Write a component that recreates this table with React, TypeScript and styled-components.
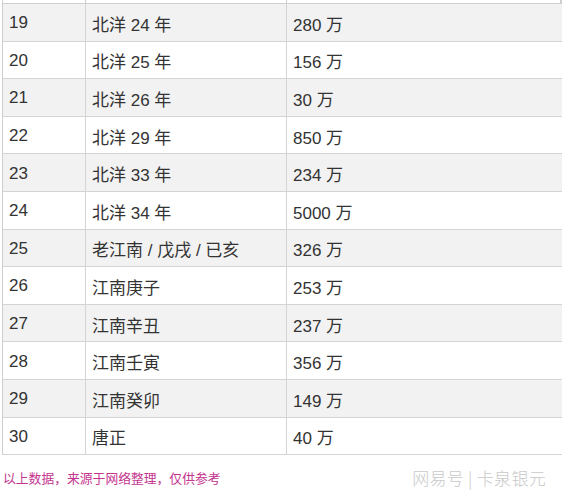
import { Fragment } from "react";
import styled, { createGlobalStyle } from "styled-components";

const GlobalStyle = createGlobalStyle`
    body {
        margin: 0;
        background: #ffffff;
        font-family: "Liberation Sans", "Noto Sans CJK SC", sans-serif;
    }
`;

const Page = styled.div`
    width: 563px;
    height: 501px;
    overflow: hidden;
    padding-left: 2px;
    box-sizing: border-box;
`;

const Table = styled.div`
    width: 559px;
    display: grid;
    grid-template-columns: 83px 201px 275px;
    border-left: 1px solid #cfcfcf;
    border-right: 1px solid #cfcfcf;
    box-sizing: border-box;
`;

const Cut = styled.div`
    height: 3px;
    border-bottom: 1px solid #cfcfcf;
    border-right: 1px solid #cfcfcf;

    &:last-child {
        border-right: none;
    }
`;

const Cell = styled.div<{ $shade: boolean; $last?: boolean }>`
    height: 37.6px;
    box-sizing: border-box;
    display: flex;
    align-items: center;
    padding: 2px 0 0 6px;
    font-size: 17px;
    color: #333333;
    background: ${(p) => (p.$shade ? "#f2f2f2" : "#ffffff")};
    border-bottom: 1px solid #d4d4d4;
    border-right: ${(p) => (p.$last ? "none" : "1px solid #d4d4d4")};
`;

const Footer = styled.div`
    height: 45px;
    display: flex;
    align-items: center;
    justify-content: space-between;
    padding-right: 17px;
`;

const Note = styled.span`
    font-family: "Noto Sans CJK SC", sans-serif;
    font-size: 12.8px;
    color: #c4358f;
    padding-left: 1px;
`;

const Mark = styled.span`
    font-family: "Noto Sans CJK SC", sans-serif;
    font-size: 17px;
    color: #c9c9c9;
    font-weight: 300;
    letter-spacing: 0.3px;
`;

const rows: [string, string, string][] = [
    ["19", "北洋 24 年", "280 万"],
    ["20", "北洋 25 年", "156 万"],
    ["21", "北洋 26 年", "30 万"],
    ["22", "北洋 29 年", "850 万"],
    ["23", "北洋 33 年", "234 万"],
    ["24", "北洋 34 年", "5000 万"],
    ["25", "老江南 / 戊戌 / 已亥", "326 万"],
    ["26", "江南庚子", "253 万"],
    ["27", "江南辛丑", "237 万"],
    ["28", "江南壬寅", "356 万"],
    ["29", "江南癸卯", "149 万"],
    ["30", "唐正", "40 万"],
];

export default function App() {
    return (
        <Page>
            <GlobalStyle />
            <Table>
                <Cut />
                <Cut />
                <Cut />
                {rows.map((r, i) => (
                    <Fragment key={r[0]}>
                        <Cell $shade={i % 2 === 0}>{r[0]}</Cell>
                        <Cell $shade={i % 2 === 0}>{r[1]}</Cell>
                        <Cell $shade={i % 2 === 0} $last>{r[2]}</Cell>
                    </Fragment>
                ))}
            </Table>
            <Footer>
                <Note>以上数据，来源于网络整理，仅供参考</Note>
                <Mark>网易号 | 卡泉银元</Mark>
            </Footer>
        </Page>
    );
}
